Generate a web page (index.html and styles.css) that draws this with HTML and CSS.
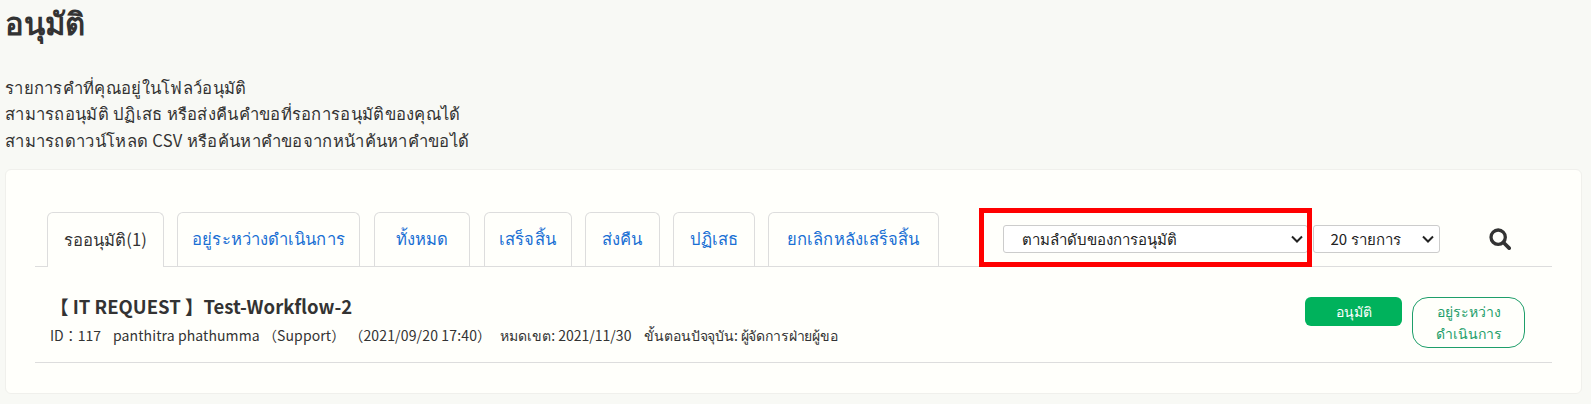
FILE: index.html
```html
<!DOCTYPE html>
<html lang="th">
<head>
    <meta charset="UTF-8">
    <title>อนุมัติ</title>
    <link rel="stylesheet" href="styles.css">
</head>
<body>
    <h1 class="page-title">อนุมัติ</h1>
    <p class="page-desc">
        รายการคำที่คุณอยู่ในโฟลว์อนุมัติ<br>
        สามารถอนุมัติ ปฏิเสธ หรือส่งคืนคำขอที่รอการอนุมัติของคุณได้<br>
        สามารถดาวน์โหลด CSV หรือค้นหาคำขอจากหน้าค้นหาคำขอได้
    </p>

    <div class="card">
        <div class="tabbar">
            <ul class="tabs">
                <li class="tab active">รออนุมัติ(1)</li>
                <li class="tab">อยู่ระหว่างดำเนินการ</li>
                <li class="tab">ทั้งหมด</li>
                <li class="tab">เสร็จสิ้น</li>
                <li class="tab">ส่งคืน</li>
                <li class="tab">ปฏิเสธ</li>
                <li class="tab">ยกเลิกหลังเสร็จสิ้น</li>
            </ul>
            <div class="tools">
                <div class="sort-wrap">
                    <select class="sort-select">
                        <option>ตามลำดับของการอนุมัติ</option>
                    </select>
                    <div class="highlight"></div>
                </div>
                <select class="count-select">
                    <option>20 รายการ</option>
                </select>
                <svg class="search-icon" viewBox="0 0 24 24" width="22" height="22">
                    <circle cx="10" cy="10" r="7.8" fill="none" stroke="#333" stroke-width="3.6"/>
                    <path d="M15.8 15.8 L22 22" stroke="#333" stroke-width="4" stroke-linecap="round"/>
                </svg>
            </div>
        </div>

        <div class="row">
            <div class="row-info">
                <div class="row-title">【 IT REQUEST 】Test-Workflow-2</div>
                <div class="row-meta">
                    <span>ID：117</span>
                    <span class="meta-name">panthitra phathumma （Support）</span>
                    <span class="meta-date">（2021/09/20 17:40）</span>
                    <span class="meta-limit">หมดเขต: 2021/11/30</span>
                    <span class="meta-step">ขั้นตอนปัจจุบัน: ผู้จัดการฝ่ายผู้ขอ</span>
                </div>
            </div>
            <div class="row-actions">
                <button class="btn-approve">อนุมัติ</button>
                <button class="btn-status">อยู่ระหว่าง<br>ดำเนินการ</button>
            </div>
        </div>
    </div>
</body>
</html>
```

FILE: styles.css
```css
body {
    font-family: "Noto Sans CJK JP", "Noto Sans", sans-serif;
    margin: 0;
    padding: 0 9px 0 5px;
    background-color: #f8f9f5;
    color: #333;
    font-size: 16.6px;
}

.page-title {
    font-size: 31px;
    font-weight: 700;
    line-height: 36px;
    margin: 4px 0 0;
}

.page-desc {
    margin: 34px 0 0;
    line-height: 26.3px;
    letter-spacing: 0.3px;
}

.card {
    margin-top: 16px;
    height: 225px;
    box-sizing: border-box;
    background: #fffffb;
    border: 1px solid #f0f0ec;
    border-radius: 6px;
    padding: 41px 29px 0 29px;
}

.tabbar {
    display: flex;
    justify-content: space-between;
    align-items: flex-end;
    height: 56px;
    box-sizing: border-box;
    border-bottom: 1px solid #ddd;
    padding-left: 12px;
}

.tabs {
    display: flex;
    gap: 13.5px;
    list-style: none;
    margin: 0;
    padding: 0;
}

.tab {
    height: 54px;
    box-sizing: border-box;
    display: flex;
    align-items: center;
    justify-content: center;
    border: 1px solid #ddd;
    border-bottom: none;
    border-radius: 6px 6px 0 0;
    color: #1a6fd4;
    white-space: nowrap;
    letter-spacing: 0.1px;
}

.tab:nth-child(1) { width: 116.5px; }
.tab:nth-child(2) { width: 183px; }
.tab:nth-child(3) { width: 96.5px; }
.tab:nth-child(4) { width: 88px; }
.tab:nth-child(5) { width: 74.5px; }
.tab:nth-child(6) { width: 81.5px; }
.tab:nth-child(7) { width: 170.5px; }

.tab.active {
    color: #333;
    background: #fffffb;
    margin-bottom: -1px;
    height: 55px;
}

.tools {
    display: flex;
    align-items: center;
    align-self: center;
    margin: 1px 41px 0 0;
}

.sort-wrap {
    position: relative;
    display: flex;
}

select {
    appearance: none;
    height: 28px;
    box-sizing: border-box;
    font-family: inherit;
    font-size: 15px;
    color: #222;
    border: 1px solid #ccc;
    border-radius: 3px;
    padding: 0 0 0 18px;
    background: #fff url("data:image/svg+xml,%3Csvg xmlns='http://www.w3.org/2000/svg' width='12' height='8'%3E%3Cpath d='M1 1.5l5 5 5-5' fill='none' stroke='%23222' stroke-width='2'/%3E%3C/svg%3E") no-repeat right 4px center;
}

.sort-select {
    width: 305px;
}

.count-select {
    width: 127px;
    margin-left: 4.6px;
    padding-left: 16.5px;
    background-position: right 5px center;
}

.highlight {
    position: absolute;
    left: -24px;
    top: -17px;
    width: 333px;
    height: 59px;
    box-sizing: border-box;
    border: 5px solid #ff0000;
}

.search-icon {
    margin-left: 49px;
}

.row {
    display: flex;
    justify-content: space-between;
    align-items: flex-start;
    height: 96px;
    box-sizing: border-box;
    border-bottom: 1px solid #ddd;
    padding-top: 26px;
}

.row-title {
    font-size: 18.5px;
    font-weight: 700;
    line-height: 26px;
    padding-left: 15px;
}

.row-meta {
    display: flex;
    gap: 12px;
    font-size: 14px;
    line-height: 24px;
    padding: 4px 0 0 15px;
    white-space: nowrap;
}

.meta-name {
    letter-spacing: 0.1px;
}

.meta-date {
    letter-spacing: 0.15px;
    margin-left: -8px;
}

.meta-limit {
    margin-left: -3px;
}

.meta-step {
    margin-left: 1px;
    letter-spacing: -0.15px;
}

.row-actions {
    display: flex;
    gap: 10px;
    align-items: flex-start;
    margin: 4px 27px 0 0;
}

.row-actions button {
    font-family: inherit;
    font-size: 14px;
    line-height: 22.6px;
}

.btn-approve {
    width: 97px;
    height: 29.5px;
    padding: 0;
    background: #00b25c;
    border: none;
    border-radius: 6px;
    color: #fff;
}

.btn-status {
    width: 113px;
    height: 51px;
    padding: 0;
    background: #fffffb;
    border: 1px solid #1e9e6a;
    border-radius: 16px;
    color: #1e9e6a;
}
```
